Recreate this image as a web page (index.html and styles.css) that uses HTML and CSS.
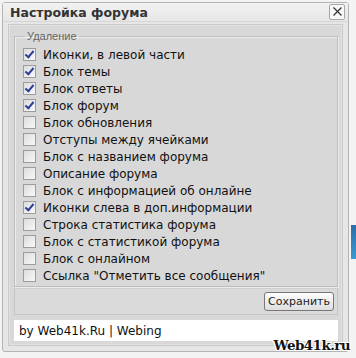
FILE: index.html
```html
<!DOCTYPE html>
<html lang="ru">
<head>
<meta charset="utf-8">
<link rel="stylesheet" href="styles.css">
</head>
<body>
<div class="dialog">
  <div class="titlebar">
    <span class="title">Настройка форума</span>
    <span class="close">
      <svg width="11" height="11" viewBox="0 0 11 11"><path d="M1.5 1.5L9.5 9.5M9.5 1.5L1.5 9.5" stroke="#333" stroke-width="1.2" fill="none"/></svg>
    </span>
  </div>
  <div class="content">
    <div class="panel">
      <fieldset class="group">
        <legend>Удаление</legend>
        <label class="row"><span class="cb on"></span>Иконки, в левой части</label>
        <label class="row"><span class="cb on"></span>Блок темы</label>
        <label class="row"><span class="cb on"></span>Блок ответы</label>
        <label class="row"><span class="cb on"></span>Блок форум</label>
        <label class="row"><span class="cb"></span>Блок обновления</label>
        <label class="row"><span class="cb"></span>Отступы между ячейками</label>
        <label class="row"><span class="cb"></span>Блок с названием форума</label>
        <label class="row"><span class="cb"></span>Описание форума</label>
        <label class="row"><span class="cb"></span>Блок с информацией об онлайне</label>
        <label class="row"><span class="cb on"></span>Иконки слева в доп.информации</label>
        <label class="row"><span class="cb"></span>Строка статистика форума</label>
        <label class="row"><span class="cb"></span>Блок с статистикой форума</label>
        <label class="row"><span class="cb"></span>Блок с онлайном</label>
        <label class="row"><span class="cb"></span>Ссылка "Отметить все сообщения"</label>
      </fieldset>
      <div class="actions"><button class="btn">Сохранить</button></div>
      <div class="footer">by Web41k.Ru | Webing</div>
    </div>
  </div>
</div>
<div class="side"></div>
<div class="mark">Web41k.ru</div>
</body>
</html>
```
FILE: styles.css
```css
html, body { margin: 0; padding: 0; }
body {
  width: 356px; height: 358px; overflow: hidden;
  background: #f3f3f3;
  font-family: "DejaVu Sans", Tahoma, sans-serif;
  position: relative;
}
.dialog {
  margin: 2px 0 0 2px;
  width: 345px; height: 348px;
  border: 1px solid #b4b4b4;
  border-radius: 3px;
  background: #e6e6e6;
  display: flex; flex-direction: column;
}
.titlebar {
  height: 26px;
  display: flex; align-items: center; justify-content: space-between;
  padding: 0 3px 0 7px;
  background: linear-gradient(#f2f2f2, #e6e6e6);
  border-bottom: 1px solid #d6d6d6;
}
.title { font-weight: bold; font-size: 12.5px; color: #333; font-family: "DejaVu Sans", sans-serif; }
.close {
  width: 14px; height: 14px; border: 1px solid #a8a8a8; border-radius: 2px;
  background: #f8f8f8; display: flex; align-items: center; justify-content: center;
  margin-top: -1px;
}
.content { flex: 1; padding: 2px 5px 5px 5px; display: flex; }
.panel {
  flex: 1; display: flex; flex-direction: column;
  background: #d8d8d8;
  border: 1px solid #cacaca;
  box-shadow: inset 0 0 0 1px #e2e2e2;
  padding: 3px 4px 4px 5px;
}
.group {
  margin: 0; padding: 1px 4px 2px 8px;
  border: 1px solid #bdbdbd;
  border-radius: 0;
  box-shadow: 1px 1px 0 #ececec, inset 1px 1px 0 #ececec;
  display: flex; flex-direction: column;
}
.group legend {
  font-size: 11px; color: #666; padding: 0 2px; margin-left: 2px;
  font-family: "Liberation Sans", sans-serif;
  line-height: 17px;
}
.row {
  display: flex; align-items: center; height: 17px;
  font-size: 12px; color: #111;
  font-family: "DejaVu Sans", sans-serif;
}
.cb {
  width: 11px; height: 11px; margin-right: 7px;
  border: 1px solid #9c9c9c;
  background: linear-gradient(135deg, #dcdcdc, #f8f8f8);
  position: relative; flex: none;
}
.cb.on::after {
  content: ""; position: absolute; left: 3px; top: 0px;
  width: 3px; height: 7px;
  border: solid #2a3f9a; border-width: 0 2px 2px 0;
  transform: rotate(40deg);
}
.actions {
  margin-top: 1px; height: 25px;
  border: 1px solid #c6c6c6; border-top-color: #cfcfcf;
  background: #dadada;
  display: flex; align-items: center; justify-content: flex-end;
  padding-right: 3px;
}
.btn {
  height: 19px; width: 70px; padding: 0;
  font-family: "DejaVu Sans", sans-serif; font-size: 11px; color: #222;
  border: 1px solid #777; border-radius: 3px;
  background: linear-gradient(#fdfdfd, #dedede);
}
.footer {
  margin-top: 5px; height: 21px;
  background: #fff;
  display: flex; align-items: center; padding-left: 5px;
  font-size: 12px; color: #111;
  font-family: "DejaVu Sans", sans-serif;
}
.side {
  position: absolute; right: 0; top: 225px; width: 5px; height: 34px;
  background: linear-gradient(#2a6ea8, #3b9ad4);
}
.mark {
  position: absolute; right: 6px; bottom: 5px;
  font-family: "DejaVu Serif", serif; font-weight: bold; font-size: 13.5px;
  color: #111; letter-spacing: -0.6px;
  text-shadow: 1px 0 0 #fff, -1px 0 0 #fff, 0 1px 0 #fff, 0 -1px 0 #fff, 1px 1px 0 #fff, -1px -1px 0 #fff, 1px -1px 0 #fff, -1px 1px 0 #fff;
}
```
